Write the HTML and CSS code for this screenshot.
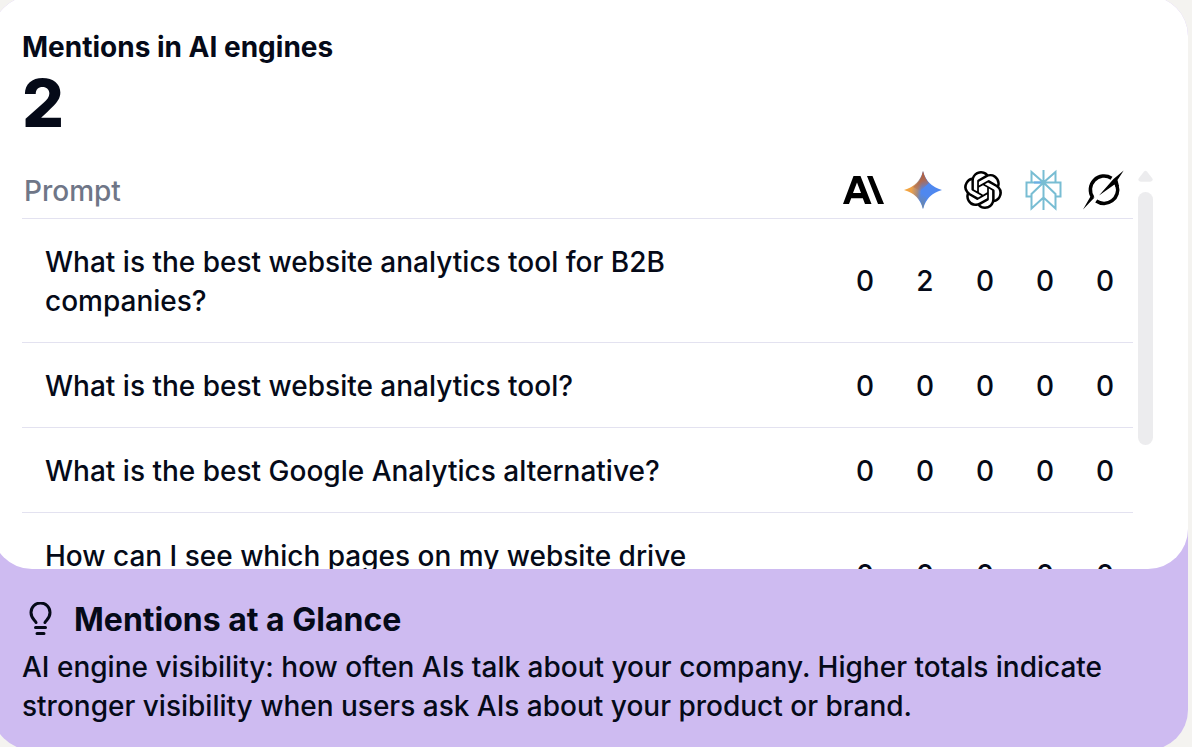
FILE: index.html
```html
<!DOCTYPE html>
<html lang="en">
	<head>
		<meta charset="utf-8">
		<title>Mentions in AI engines</title>
		<link rel="stylesheet" href="styles.css">
	</head>
	<body>
		<main class="card">
			<section class="panel">
				<h2 class="panel-title">Mentions in AI engines</h2>
				<div class="total">2</div>
				<div class="scroller">
					<table class="prompts">
						<thead>
							<tr>
								<th class="prompt" scope="col">Prompt</th>
								<th scope="col">
									<svg width="42" height="42" viewBox="0 0 42 42" role="img" aria-label="Claude">
										<path fill-rule="evenodd" d="M11.500 7h7l11 28h-6.500l-2.200-5.800H9.200L7 35H1zM15 13.500L11 24h8zM25 7h5.500L42 35h-6z"/>
									</svg>
								</th>
								<th scope="col">
									<svg width="42" height="42" viewBox="0 0 42 42" role="img" aria-label="Gemini">
										<defs>
											<linearGradient id="gem" x1="2" y1="19" x2="40" y2="23" gradientUnits="userSpaceOnUse">
												<stop offset="0" stop-color="#f7a838"/>
												<stop offset=".2" stop-color="#eda04a"/>
												<stop offset=".36" stop-color="#a58a80"/>
												<stop offset=".46" stop-color="#4f88ef"/>
											</linearGradient>
											<linearGradient id="gem-top" x1="16" y1="3" x2="21" y2="22" gradientUnits="userSpaceOnUse">
												<stop offset="0" stop-color="#b9582f"/>
												<stop offset=".5" stop-color="#b8663f" stop-opacity=".85"/>
												<stop offset="1" stop-color="#b8663f" stop-opacity="0"/>
											</linearGradient>
											<linearGradient id="gem-bottom" x1="19" y1="40" x2="22" y2="25" gradientUnits="userSpaceOnUse">
												<stop offset="0" stop-color="#75858f"/>
												<stop offset="1" stop-color="#75858f" stop-opacity="0"/>
											</linearGradient>
										</defs>
										<path fill="url(#gem)" d="M21 2Q25 17 40 21Q25 25 21 40Q17 25 2 21Q17 17 21 2z"/>
										<path fill="url(#gem-top)" d="M21 2Q23 10 27 14L18 22L11 18Q19 13 21 2z"/>
										<path fill="url(#gem-bottom)" d="M21 40Q23 31 25 29L18 22L13 24.500Q19 30 21 40z"/>
									</svg>
								</th>
								<th scope="col">
									<svg width="42" height="42" viewBox="-1.250 -1.250 26.500 26.500" role="img" aria-label="ChatGPT">
										<path d="M22.2819 9.8211a5.9847 5.9847 0 0 0-.5157-4.9108 6.0462 6.0462 0 0 0-6.5098-2.9A6.0651 6.0651 0 0 0 4.9807 4.1818a5.9847 5.9847 0 0 0-3.9977 2.9 6.0462 6.0462 0 0 0 .7427 7.0966 5.98 5.98 0 0 0 .511 4.9107 6.051 6.051 0 0 0 6.5146 2.9001A5.9847 5.9847 0 0 0 13.2599 24a6.0557 6.0557 0 0 0 5.7718-4.2058 5.9894 5.9894 0 0 0 3.9977-2.9001 6.0557 6.0557 0 0 0-.7475-7.0729zm-9.022 12.6081a4.4755 4.4755 0 0 1-2.8764-1.0408l.1419-.0804 4.7783-2.7582a.7948.7948 0 0 0 .3927-.6813v-6.7369l2.02 1.1686a.071.071 0 0 1 .038.052v5.5826a4.504 4.504 0 0 1-4.4945 4.4944zm-9.6607-4.1254a4.4708 4.4708 0 0 1-.5346-3.0137l.142.0852 4.783 2.7582a.7712.7712 0 0 0 .7806 0l5.8428-3.3685v2.3324a.0804.0804 0 0 1-.0332.0615L9.74 19.9502a4.4992 4.4992 0 0 1-6.1408-1.6464zM2.3408 7.8956a4.485 4.485 0 0 1 2.3655-1.9728V11.6a.7664.7664 0 0 0 .3879.6765l5.8144 3.3543-2.0201 1.1685a.0757.0757 0 0 1-.071 0l-4.8303-2.7865A4.504 4.504 0 0 1 2.3408 7.872zm16.5963 3.8558L13.1038 8.364 15.1192 7.2a.0757.0757 0 0 1 .071 0l4.8303 2.7913a4.4944 4.4944 0 0 1-.6765 8.1042v-5.6772a.79.79 0 0 0-.407-.667zm2.0107-3.0231l-.142-.0852-4.7735-2.7818a.7759.7759 0 0 0-.7854 0L9.409 9.2297V6.8974a.0662.0662 0 0 1 .0284-.0615l4.8303-2.7866a4.4992 4.4992 0 0 1 6.6802 4.66zM8.3065 12.863l-2.02-1.1638a.0804.0804 0 0 1-.038-.0567V6.0742a4.4992 4.4992 0 0 1 7.3757-3.4537l-.142.0805L8.704 5.459a.7948.7948 0 0 0-.3927.6813zm1.0976-2.3654l2.602-1.4998 2.6069 1.4998v2.9994l-2.5974 1.4997-2.6067-1.4997Z"/>
									</svg>
								</th>
								<th scope="col">
									<svg width="42" height="42" viewBox="0 0 42 42" role="img" aria-label="Perplexity" fill="none" stroke="#78bdd3" stroke-width="2">
										<path d="M21.500 1v40M21.500 13.500L9.500 3v10.500M21.500 13.500L33.500 3v10.500M9.500 27.500h-5v-14h34v14h-5M21.500 13.500L9.500 25v14.500l12-11M21.500 13.500l12 11.500v14.500l-12-11"/>
										<path stroke="#6aaee6" d="M12 13.500h7"/>
									</svg>
								</th>
								<th scope="col">
									<svg width="42" height="42" viewBox="0 0 42 42" role="img" aria-label="Grok">
										<path fill="none" stroke="#000" stroke-width="3.500" d="M29.500 9.200A13.700 13.700 0 0 0 10.800 28.500M35 16.500A13.700 13.700 0 0 1 14.200 32"/>
										<path d="M41.700 1.500L35.500 11L37 17L33.500 18L32.500 15.500L17 26.500L31.500 10zM1 40.500L8.500 27.500L12.500 28.500z"/>
									</svg>
								</th>
							</tr>
						</thead>
						<tbody>
							<tr>
								<td class="prompt">What is the best website analytics tool for B2B companies?</td>
								<td>0</td>
								<td>2</td>
								<td>0</td>
								<td>0</td>
								<td>0</td>
							</tr>
							<tr>
								<td class="prompt">What is the best website analytics tool?</td>
								<td>0</td>
								<td>0</td>
								<td>0</td>
								<td>0</td>
								<td>0</td>
							</tr>
							<tr>
								<td class="prompt">What is the best Google Analytics alternative?</td>
								<td>0</td>
								<td>0</td>
								<td>0</td>
								<td>0</td>
								<td>0</td>
							</tr>
							<tr class="two-line">
								<td class="prompt">How can I see which pages on my website drive</td>
								<td>0</td>
								<td>0</td>
								<td>0</td>
								<td>0</td>
								<td>0</td>
							</tr>
						</tbody>
					</table>
					<div class="scrollbar">
						<svg class="scroll-up" width="16" height="12" viewBox="0 0 16 12">
							<path fill="#ececee" d="M6.500 1.200Q8-.5 9.500 1.200L15 8Q17 11.500 13 12H3Q-1 11.500 1 8z"/>
						</svg>
						<div class="scroll-thumb"></div>
					</div>
				</div>
			</section>
			<section class="glance">
				<h3 class="glance-title">
					<svg width="36" height="36" viewBox="0 0 36 36" fill="none" stroke="#050a18" stroke-width="3" stroke-linecap="round" stroke-linejoin="round">
						<path d="M14 20.500C13 18 9 16.500 9 10.500a9.500 9.500 0 0 1 19 0C28 16.500 24 18 23 20.500M13.500 25.500h10M15 31.500h7"/>
					</svg>
					Mentions at a Glance
				</h3>
				<p class="glance-text">AI engine visibility: how often AIs talk about your company. Higher totals indicate stronger visibility when users ask AIs about your product or brand.</p>
			</section>
		</main>
	</body>
</html>
```
FILE: styles.css
```css
* {
	box-sizing: border-box;
}
body {
	margin: 0;
	overflow: hidden;
	background-color: #f4f3f0;
	color: #050a18;
	font-family: Inter, "Liberation Sans", sans-serif;
	font-size: 28px;
	font-weight: 500;
	line-height: 39px;
}
.card {
	margin: -4px 4px 0 -8px;
	border-radius: 40px;
	background-color: #cebbf1;
}
.panel {
	height: 573px;
	padding: 32px 35px 0 30px;
	overflow: hidden;
	border-radius: 40px;
	background-color: #fff;
}
.panel-title {
	margin: 0;
	font-size: 28px;
	font-weight: 700;
	line-height: 39px;
}
.total {
	font-size: 66px;
	font-weight: 800;
	line-height: 72px;
}
.scroller {
	display: flex;
	gap: 5px;
	margin-top: 24px;
}
.prompts {
	flex: 1;
	table-layout: fixed;
	border-collapse: collapse;
}
th,td {
	width: 60px;
	padding: 24px 0 21px 4px;
	border-bottom: 1px solid #e3e2f0;
	text-align: center;
}
th {
	height: 55px;
	padding: 0;
	color: #6f7687;
	font-weight: 500;
}
th svg {
	display: block;
	margin: 0 auto;
}
.prompt {
	width: auto;
	text-align: left;
}
th.prompt {
	padding-top: 3px;
	padding-left: 2px;
}
td.prompt {
	padding-right: 100px;
	padding-left: 23px;
}
.two-line td {
	height: 124px;
}
.two-line .prompt {
	vertical-align: top;
}
.scrollbar {
	width: 15px;
	padding-top: 7px;
}
.scroll-up {
	display: block;
	width: 15px;
}
.scroll-thumb {
	height: 253px;
	margin-top: 10px;
	border-radius: 8px;
	background-color: #ececee;
}
.glance {
	padding: 31px 80px 24px 30px;
}
.glance-title {
	display: flex;
	align-items: center;
	gap: 16px;
	margin: 0;
	font-size: 32px;
	font-weight: 700;
	line-height: 40px;
}
.glance-text {
	margin: 8px 0 0;
}
```
